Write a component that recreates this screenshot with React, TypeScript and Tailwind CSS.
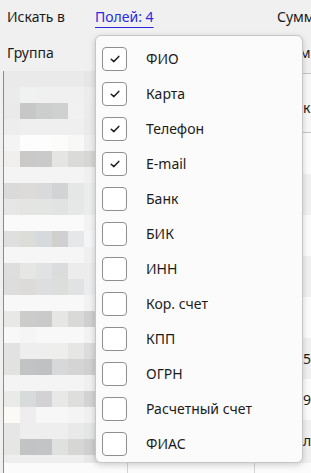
import React from "react";

const mosaic: string[][] = [
  ["bg-[#eaeaea]", "bg-[#eaeaea]", "bg-[#eaeaea]", "bg-[#eaeaea]", "bg-[#eaeaea]", "bg-[#e6e6e6]"],
  ["bg-[#ebebeb]", "bg-[#f0f1f1]", "bg-[#f0f0f0]", "bg-[#f0f0f0]", "bg-[#f0f0f0]", "bg-[#ececec]"],
  ["bg-[#eaeaea]", "bg-[#c6c7c6]", "bg-[#cccece]", "bg-[#d0d0d0]", "bg-[#f1f1f1]", "bg-[#ebebeb]"],
  ["bg-[#ededed]", "bg-[#efefef]", "bg-[#efefef]", "bg-[#efefef]", "bg-[#efefef]", "bg-[#eaeaea]"],
  ["bg-[#f4f4f4]", "bg-[#fdfdfd]", "bg-[#fdfdfd]", "bg-[#fcfcfb]", "bg-[#f8f8f8]", "bg-[#eeeeee]"],
  ["bg-[#f0efed]", "bg-[#c9c9c9]", "bg-[#cbcacb]", "bg-[#e5e5e3]", "bg-[#dadada]", "bg-[#d6d6d5]"],
  ["bg-[#f4f4f4]", "bg-[#f4f4f4]", "bg-[#f4f4f4]", "bg-[#f4f4f4]", "bg-[#f4f4f4]", "bg-[#f0f0f0]"],
  ["bg-[#dadada]", "bg-[#dcdbd9]", "bg-[#d9dadc]", "bg-[#d3d3d3]", "bg-[#e5e7e6]", "bg-[#ececec]"],
  ["bg-[#e6e6e6]", "bg-[#e4e4e3]", "bg-[#e3e4e4]", "bg-[#e2e2e2]", "bg-[#e6e7e7]", "bg-[#ececec]"],
  ["bg-[#fafafa]", "bg-[#fafafa]", "bg-[#fafafa]", "bg-[#fafafa]", "bg-[#fafafa]", "bg-[#f3f3f3]"],
  ["bg-[#e0dfdf]", "bg-[#dcdcd8]", "bg-[#d6dadd]", "bg-[#d0d0d0]", "bg-[#e6e7e9]", "bg-[#f5f5f5]"],
  ["bg-[#f6f6f6]", "bg-[#f6f6f6]", "bg-[#f6f6f6]", "bg-[#f6f6f6]", "bg-[#f6f6f6]", "bg-[#f0f0f0]"],
  ["bg-[#dedede]", "bg-[#e6e6e4]", "bg-[#e0e2e4]", "bg-[#dcdcdc]", "bg-[#ececec]", "bg-[#ececec]"],
  ["bg-[#dddddd]", "bg-[#dcdbd9]", "bg-[#dcdee0]", "bg-[#dddddb]", "bg-[#e0e2e4]", "bg-[#ececec]"],
  ["bg-[#f8f8f8]", "bg-[#f8f8f8]", "bg-[#f8f8f8]", "bg-[#f8f8f8]", "bg-[#f8f8f8]", "bg-[#f2f2f2]"],
  ["bg-[#e8e8e6]", "bg-[#cccccc]", "bg-[#cbcacb]", "bg-[#e6e6e4]", "bg-[#d9d9d9]", "bg-[#d0cfd0]"],
  ["bg-[#f8f8f8]", "bg-[#f5f5f5]", "bg-[#f8f8f8]", "bg-[#f8f8f8]", "bg-[#f8f8f8]", "bg-[#f2f2f2]"],
  ["bg-[#e2e2e2]", "bg-[#eeeeee]", "bg-[#eeeeee]", "bg-[#eeeeed]", "bg-[#e6e6e6]", "bg-[#dcdcdc]"],
  ["bg-[#e2e2e1]", "bg-[#c2c3c4]", "bg-[#c0c1c2]", "bg-[#d8d8d8]", "bg-[#d4d4d4]", "bg-[#d0d0d0]"],
  ["bg-[#f4f4f4]", "bg-[#f4f4f4]", "bg-[#f4f4f4]", "bg-[#f4f4f4]", "bg-[#f4f4f4]", "bg-[#f0f0f0]"],
  ["bg-[#eaeae8]", "bg-[#d8dbdb]", "bg-[#d2d2d4]", "bg-[#e8e8e6]", "bg-[#dedede]", "bg-[#d4d3d4]"],
  ["bg-[#fbfaf7]", "bg-[#eeeeee]", "bg-[#f7f7f7]", "bg-[#f7f7f7]", "bg-[#f4f4f4]", "bg-[#f0f0f0]"],
  ["bg-[#e6e6e6]", "bg-[#eeeeee]", "bg-[#eeeeee]", "bg-[#eeeeee]", "bg-[#e9e9e9]", "bg-[#e4e5e5]"],
  ["bg-[#e6e6e5]", "bg-[#c2c3c4]", "bg-[#c3c4c5]", "bg-[#e0e0de]", "bg-[#d6d6d6]", "bg-[#d0cfd0]"],
  ["bg-[#eeeeee]", "bg-[#eeeeee]", "bg-[#eeeeee]", "bg-[#eeeeee]", "bg-[#eeeeee]", "bg-[#e8e8e8]"],
];

const fields = [
  { label: "ФИО", checked: true },
  { label: "Карта", checked: true },
  { label: "Телефон", checked: true },
  { label: "E-mail", checked: true },
  { label: "Банк", checked: false },
  { label: "БИК", checked: false },
  { label: "ИНН", checked: false },
  { label: "Кор. счет", checked: false },
  { label: "КПП", checked: false },
  { label: "ОГРН", checked: false },
  { label: "Расчетный счет", checked: false },
  { label: "ФИАС", checked: false },
];

const rows = [
  { bg: "bg-[#fbfbfb]", value: "" },
  { bg: "bg-[#f0f0f0]", value: "" },
  { bg: "bg-[#fbfbfb]", value: "" },
  { bg: "bg-[#f0f0f0]", value: "" },
  { bg: "bg-[#fbfbfb]", value: "" },
  { bg: "bg-[#f0f0f0]", value: "50" },
  { bg: "bg-[#fbfbfb]", value: "90" },
  { bg: "bg-[#f0f0f0]", value: "лі" },
];

const Checkbox = ({ checked }: { checked: boolean }) => (
  <div className="w-[25px] h-[24px] shrink-0 rounded-[4px] border border-[#8f8f8f] bg-white flex items-center justify-center">
    {checked && (
      <svg width="10" height="8" viewBox="0 0 10 8" fill="none">
        <path d="M1.2 4.2 L3.9 6.6 L8.8 1.4" stroke="#1c1c1c" strokeWidth="1.5" strokeLinecap="round" strokeLinejoin="round" />
      </svg>
    )}
  </div>
);

export default function App() {
  return (
    <div
      className="relative w-[311px] h-[473px] overflow-hidden bg-[#f0f0f0] text-[14px] text-[#1b1b1b]"
      style={{ fontFamily: '"Noto Sans", "Liberation Sans", sans-serif' }}
    >
      {/* filter rows */}
      <div className="h-[33px] flex items-center pl-[7px] whitespace-nowrap">
        <span className="w-[88px] shrink-0">Искать в</span>
        <span className="w-[182px] shrink-0">
          <span className="text-[#2a2ae0] underline decoration-[#2a2ae0] underline-offset-[5px]">Полей: 4</span>
        </span>
        <span className="shrink-0">Сумм</span>
      </div>
      <div className="h-[38px] flex items-center pl-[7px] whitespace-nowrap">
        <span className="w-[266px] shrink-0">Группа</span>
        <span className="shrink-0">Сумм</span>
      </div>

      {/* table (pixelated) */}
      <div className="ml-[3px] border-l border-[#8a8a8a] flex flex-col h-[402px]">
        <div className="flex h-[392px]">
          <div className="w-[96px] shrink-0 flex flex-col">
            {mosaic.map((r, i) => (
              <div key={i} className={`flex ${i === mosaic.length - 1 ? "h-[8px]" : "h-[16px]"}`}>
                {r.map((c, j) => (
                  <div key={j} className={`w-[16px] h-full ${c}`} />
                ))}
              </div>
            ))}
          </div>
          <div className="flex-1 flex flex-col">
            <div className="h-[2px]" />
            <div className="h-[60px] bg-[#f7f7f7] border-y border-[#c4c4c4] flex items-center pt-[8px] pl-[203px] whitespace-nowrap">
              к
            </div>
            {rows.map((r, i) => (
              <div key={i} className={`h-[41px] ${r.bg} flex items-center pl-[203px] whitespace-nowrap`}>
                {r.value}
              </div>
            ))}
          </div>
        </div>
        <div className="flex-1 bg-[#fbfbfb] flex">
          <div className="w-[124px] border-r border-[#d4d4d4]" />
          <div className="w-[127px] border-r border-[#d4d4d4]" />
        </div>
      </div>

      {/* fields popover */}
      <div className="absolute left-[95px] top-[35px] w-[208px] rounded-[6px] border border-[#c6c6c6] bg-[#fbfbfb] shadow-[0_2px_6px_rgba(0,0,0,0.18)] pt-[5px] pb-[1px] pl-[6px]">
        {fields.map((f) => (
          <div key={f.label} className="h-[35px] flex items-center gap-[19px]">
            <Checkbox checked={f.checked} />
            <span>{f.label}</span>
          </div>
        ))}
      </div>
    </div>
  );
}
